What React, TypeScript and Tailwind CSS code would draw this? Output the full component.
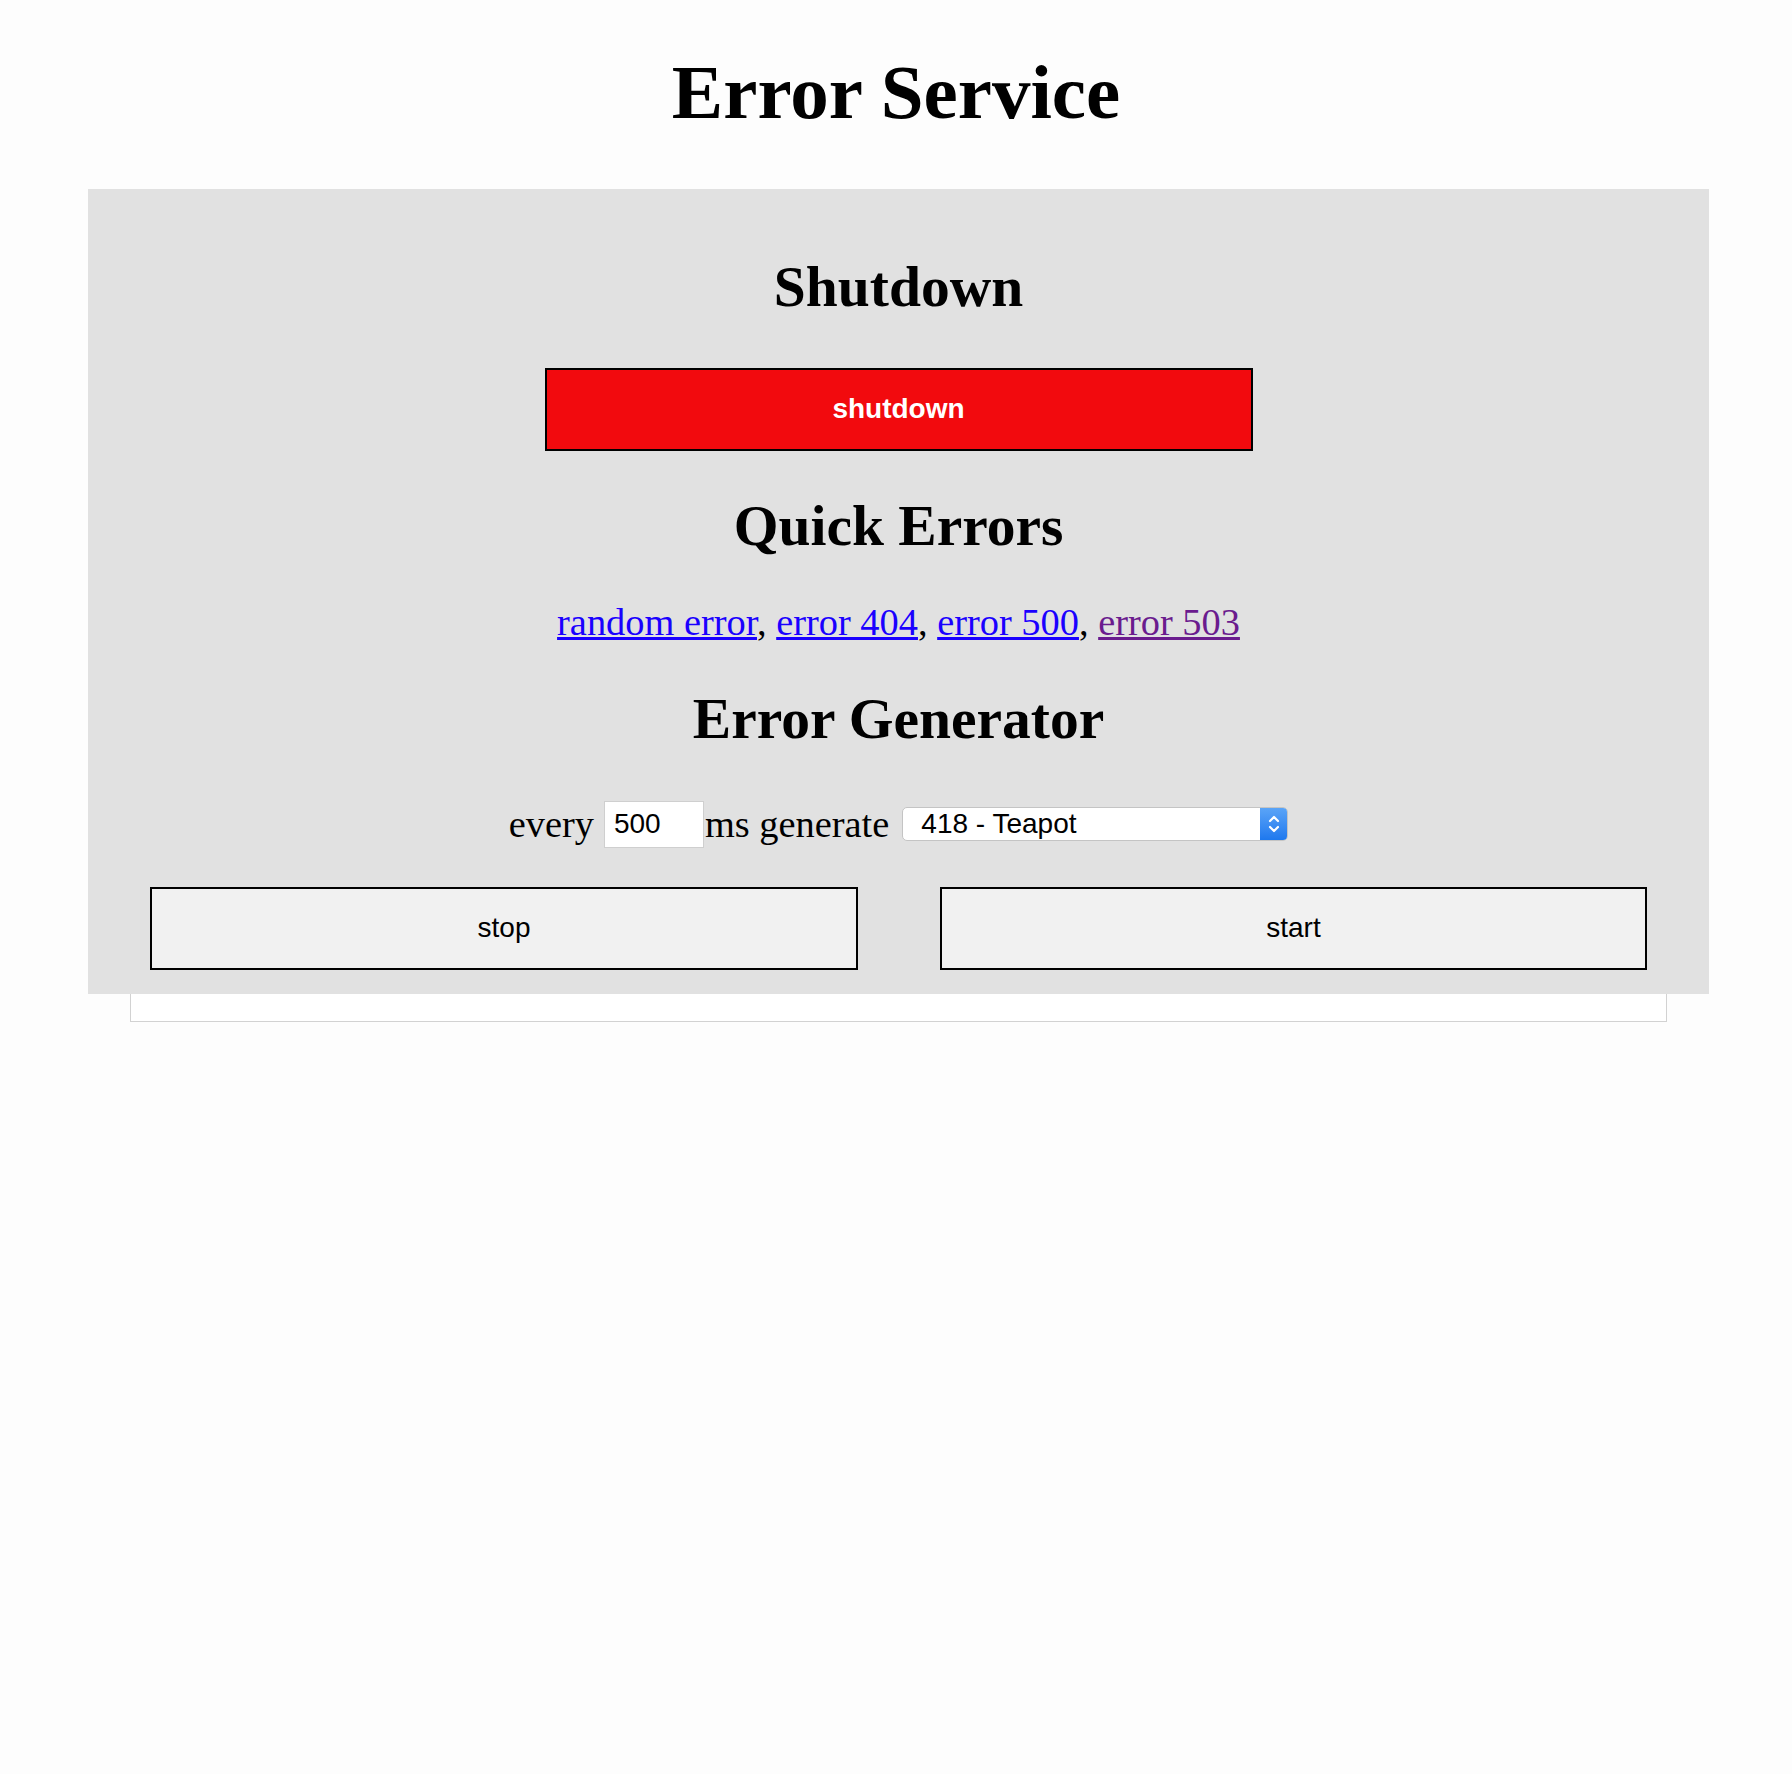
const App = () => {
  const links = [
    { label: "random error", visited: false },
    { label: "error 404", visited: false },
    { label: "error 500", visited: false },
    { label: "error 503", visited: true },
  ];

  return (
    <div className="min-h-[1774px] bg-[#fdfdfd] font-['Liberation_Serif',serif] text-black">
      <h1 className="pt-[54px] text-center text-[77px] font-bold leading-none">Error Service</h1>

      <div className="ml-[88px] mt-[58px] w-[1621px] bg-[#e1e1e1] px-[62px] pt-[69px] pb-[24px]">
        <h2 className="text-center text-[57.5px] font-bold leading-none">Shutdown</h2>

        <div className="mt-[52px] flex justify-center">
          <button className="h-[83px] w-[708px] border-2 border-black bg-[#f20a0e] font-['Liberation_Sans',sans-serif] text-[28px] font-bold text-white">
            shutdown
          </button>
        </div>

        <h2 className="mt-[46px] text-center text-[57.5px] font-bold leading-none">Quick Errors</h2>

        <p className="mt-[49px] text-center text-[38.4px] leading-none">
          {links.map((link, i) => (
            <span key={link.label}>
              <a href="#" className={link.visited ? "text-[#6a1b8e] underline" : "text-[#1a00ff] underline"}>
                {link.label}
              </a>
              {i < links.length - 1 && ", "}
            </span>
          ))}
        </p>

        <h2 className="mt-[49px] text-center text-[57.5px] font-bold leading-none">Error Generator</h2>

        <div className="mt-[53px] flex h-[47px] items-center justify-center text-[38.4px] leading-none">
          <span className="mr-[10px]">every</span>
          <div className="flex h-[47px] w-[100px] items-center border border-[#cfcfcf] bg-white pl-[9px] font-['Liberation_Sans',sans-serif] text-[28px]">
            500
          </div>
          <span className="ml-[1px] mr-[13px]">ms generate</span>
          <div className="flex h-[34px] w-[386px] items-center overflow-hidden rounded-[5px] border border-[#c4c4c4] bg-white font-['Liberation_Sans',sans-serif] text-[28px]">
            <span className="flex-1 pl-[18px]">418 - Teapot</span>
            <div className="flex h-full w-[27px] items-center justify-center bg-gradient-to-b from-[#5aa4f7] to-[#1d78ee]">
              <svg width="14" height="22" viewBox="0 0 14 22" fill="none" stroke="white" strokeWidth="2.2" strokeLinecap="round" strokeLinejoin="round">
                <path d="M3 8 L7 4 L11 8" />
                <path d="M3 14 L7 18 L11 14" />
              </svg>
            </div>
          </div>
        </div>

        <div className="mt-[39px] flex justify-between font-['Liberation_Sans',sans-serif] text-[28px]">
          <button className="h-[83px] w-[708px] border-2 border-black bg-[#f1f1f1]">stop</button>
          <button className="h-[83px] w-[707px] border-2 border-black bg-[#f1f1f1]">start</button>
        </div>
      </div>

      <div className="ml-[130px] h-[28px] w-[1537px] border border-t-0 border-[#d2d2d2] bg-white" />
    </div>
  );
};

export default App;
